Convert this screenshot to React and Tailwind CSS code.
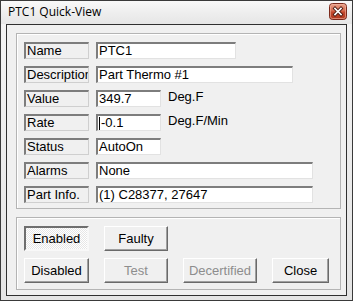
import React from 'react';

const font = { fontFamily: '"Liberation Sans", Arial, sans-serif' };

const rows = [
    { label: 'Name', value: 'PTC1', width: 'w-[140px]' },
    { label: 'Description', value: 'Part Thermo #1', width: 'w-[197px]' },
    { label: 'Value', value: '349.7', width: 'w-[65px]', unit: 'Deg.F' },
    { label: 'Rate', value: '-0.1', width: 'w-[65px]', unit: 'Deg.F/Min', caret: true },
    { label: 'Status', value: 'AutoOn', width: 'w-[65px]' },
    { label: 'Alarms', value: 'None', width: 'w-[217px]' },
    { label: 'Part Info.', value: '(1) C28377, 27647', width: 'w-[217px]' },
];

const Field = ({ label, value, width, unit, caret }) => (
    <div className="flex items-center h-[17px]">
        <div className="w-[65px] h-[17px] overflow-hidden whitespace-nowrap border-t-2 border-l-2 border-t-[#7d7d7d] border-l-[#7d7d7d] border-r border-b border-r-[#cfcfcf] border-b-[#cfcfcf] bg-[#f0f0f0] pl-[1px] text-[13px] leading-[14px] text-black">
            {label}
        </div>
        <div className={`${width} ml-[7px] h-[17px] overflow-hidden whitespace-nowrap border-t-2 border-l-2 border-t-[#7d7d7d] border-l-[#7d7d7d] border-r border-b border-r-[#e2e2e2] border-b-[#e2e2e2] bg-white pl-[1px] text-[13px] leading-[14px] text-black flex items-center`}>
            {caret && <span className="inline-block w-px h-[13px] bg-black mr-px" />}
            {value}
        </div>
        {unit && <div className="ml-[7px] text-[13px] leading-[14px] -mt-[3px] text-black">{unit}</div>}
    </div>
);

const Button = ({ children, width, disabled, pressed }) => (
    <div
        className={`${width} h-[25px] flex items-center justify-center text-[13px] ${
            disabled ? 'text-[#8d8d8d]' : 'text-black'
        } ${
            pressed
                ? 'border-2 border-t-[#6e6e6e] border-l-[#6e6e6e] border-r-[#f8f8f8] border-b-[#f8f8f8] bg-[repeating-conic-gradient(#ffffff_0_25%,#e6e6e6_0_50%)] bg-[length:2px_2px]'
                : 'border border-t-white border-l-white border-r-[#6a6a6a] border-b-[#6a6a6a] bg-[#f0f0f0] shadow-[inset_-1px_-1px_0_#a0a0a0]'
        }`}
    >
        {children}
    </div>
);

// small red caption close button, drawn as svg
const CloseIcon = () => (
    <svg width="18" height="17" viewBox="0 0 18 17" className="-mt-[2px]">
        <defs>
            <linearGradient id="cx" x1="0" y1="0" x2="0" y2="1">
                <stop offset="0" stopColor="#eaa48d" />
                <stop offset="0.45" stopColor="#d56a4f" />
                <stop offset="0.55" stopColor="#c2472c" />
                <stop offset="1" stopColor="#b0381e" />
            </linearGradient>
        </defs>
        <rect x="0.5" y="0.5" width="17" height="16" rx="3" fill="url(#cx)" stroke="#7b2a1c" />
        <rect x="1.5" y="1.5" width="15" height="14" rx="2" fill="none" stroke="#f2b8a4" strokeOpacity="0.6" />
        <path d="M6 5.5 L12 11.5 M12 5.5 L6 11.5" stroke="#4a1a10" strokeWidth="3.4" strokeLinecap="square" />
        <path d="M6 5.5 L12 11.5 M12 5.5 L6 11.5" stroke="#ffffff" strokeWidth="1.7" strokeLinecap="square" />
    </svg>
);

const App = () => {
    return (
        <div className="w-[353px] h-[301px] border border-[#3a3a3a] bg-linear-to-b from-[#f4f4f4] to-[#e4e4e4] flex flex-col" style={font}>
            <div className="h-[23px] flex items-center justify-between pl-[7px] pr-[5px] bg-linear-to-b from-[#f9f9f9] via-[#eeeeee] to-[#e6e6e6]">
                <span className="text-[12px] text-black mt-[-1px]" style={{ fontFamily: '"Open Sans", "Noto Sans", sans-serif' }}>
                    PTC1 Quick-View
                </span>
                <CloseIcon />
            </div>
            <div className="mx-[5px] border border-[#2f2f2f] bg-[#f0f0f0] h-[272px] flex flex-col pl-[9px] pr-[5px] pt-[8px]">
                <div className="w-[325px] h-[176px] border border-[#b4b4b4] shadow-[inset_1px_1px_0_#ffffff] flex flex-col gap-[7px] pl-[7px] pt-[8px]">
                    {rows.map((r) => (
                        <Field key={r.label} {...r} />
                    ))}
                </div>
                <div className="mt-[8px] w-[325px] h-[73px] border border-[#b4b4b4] shadow-[inset_1px_1px_0_#ffffff] flex flex-col gap-[7px] pl-[7px] pt-[8px]">
                    <div className="flex gap-[15px]">
                        <Button width="w-[65px]" pressed>Enabled</Button>
                        <Button width="w-[64px]">Faulty</Button>
                    </div>
                    <div className="flex gap-[15px]">
                        <Button width="w-[65px]">Disabled</Button>
                        <Button width="w-[64px]" disabled>Test</Button>
                        <Button width="w-[74px]" disabled>Decertified</Button>
                        <Button width="w-[57px]">Close</Button>
                    </div>
                </div>
            </div>
        </div>
    );
};

export default App;
